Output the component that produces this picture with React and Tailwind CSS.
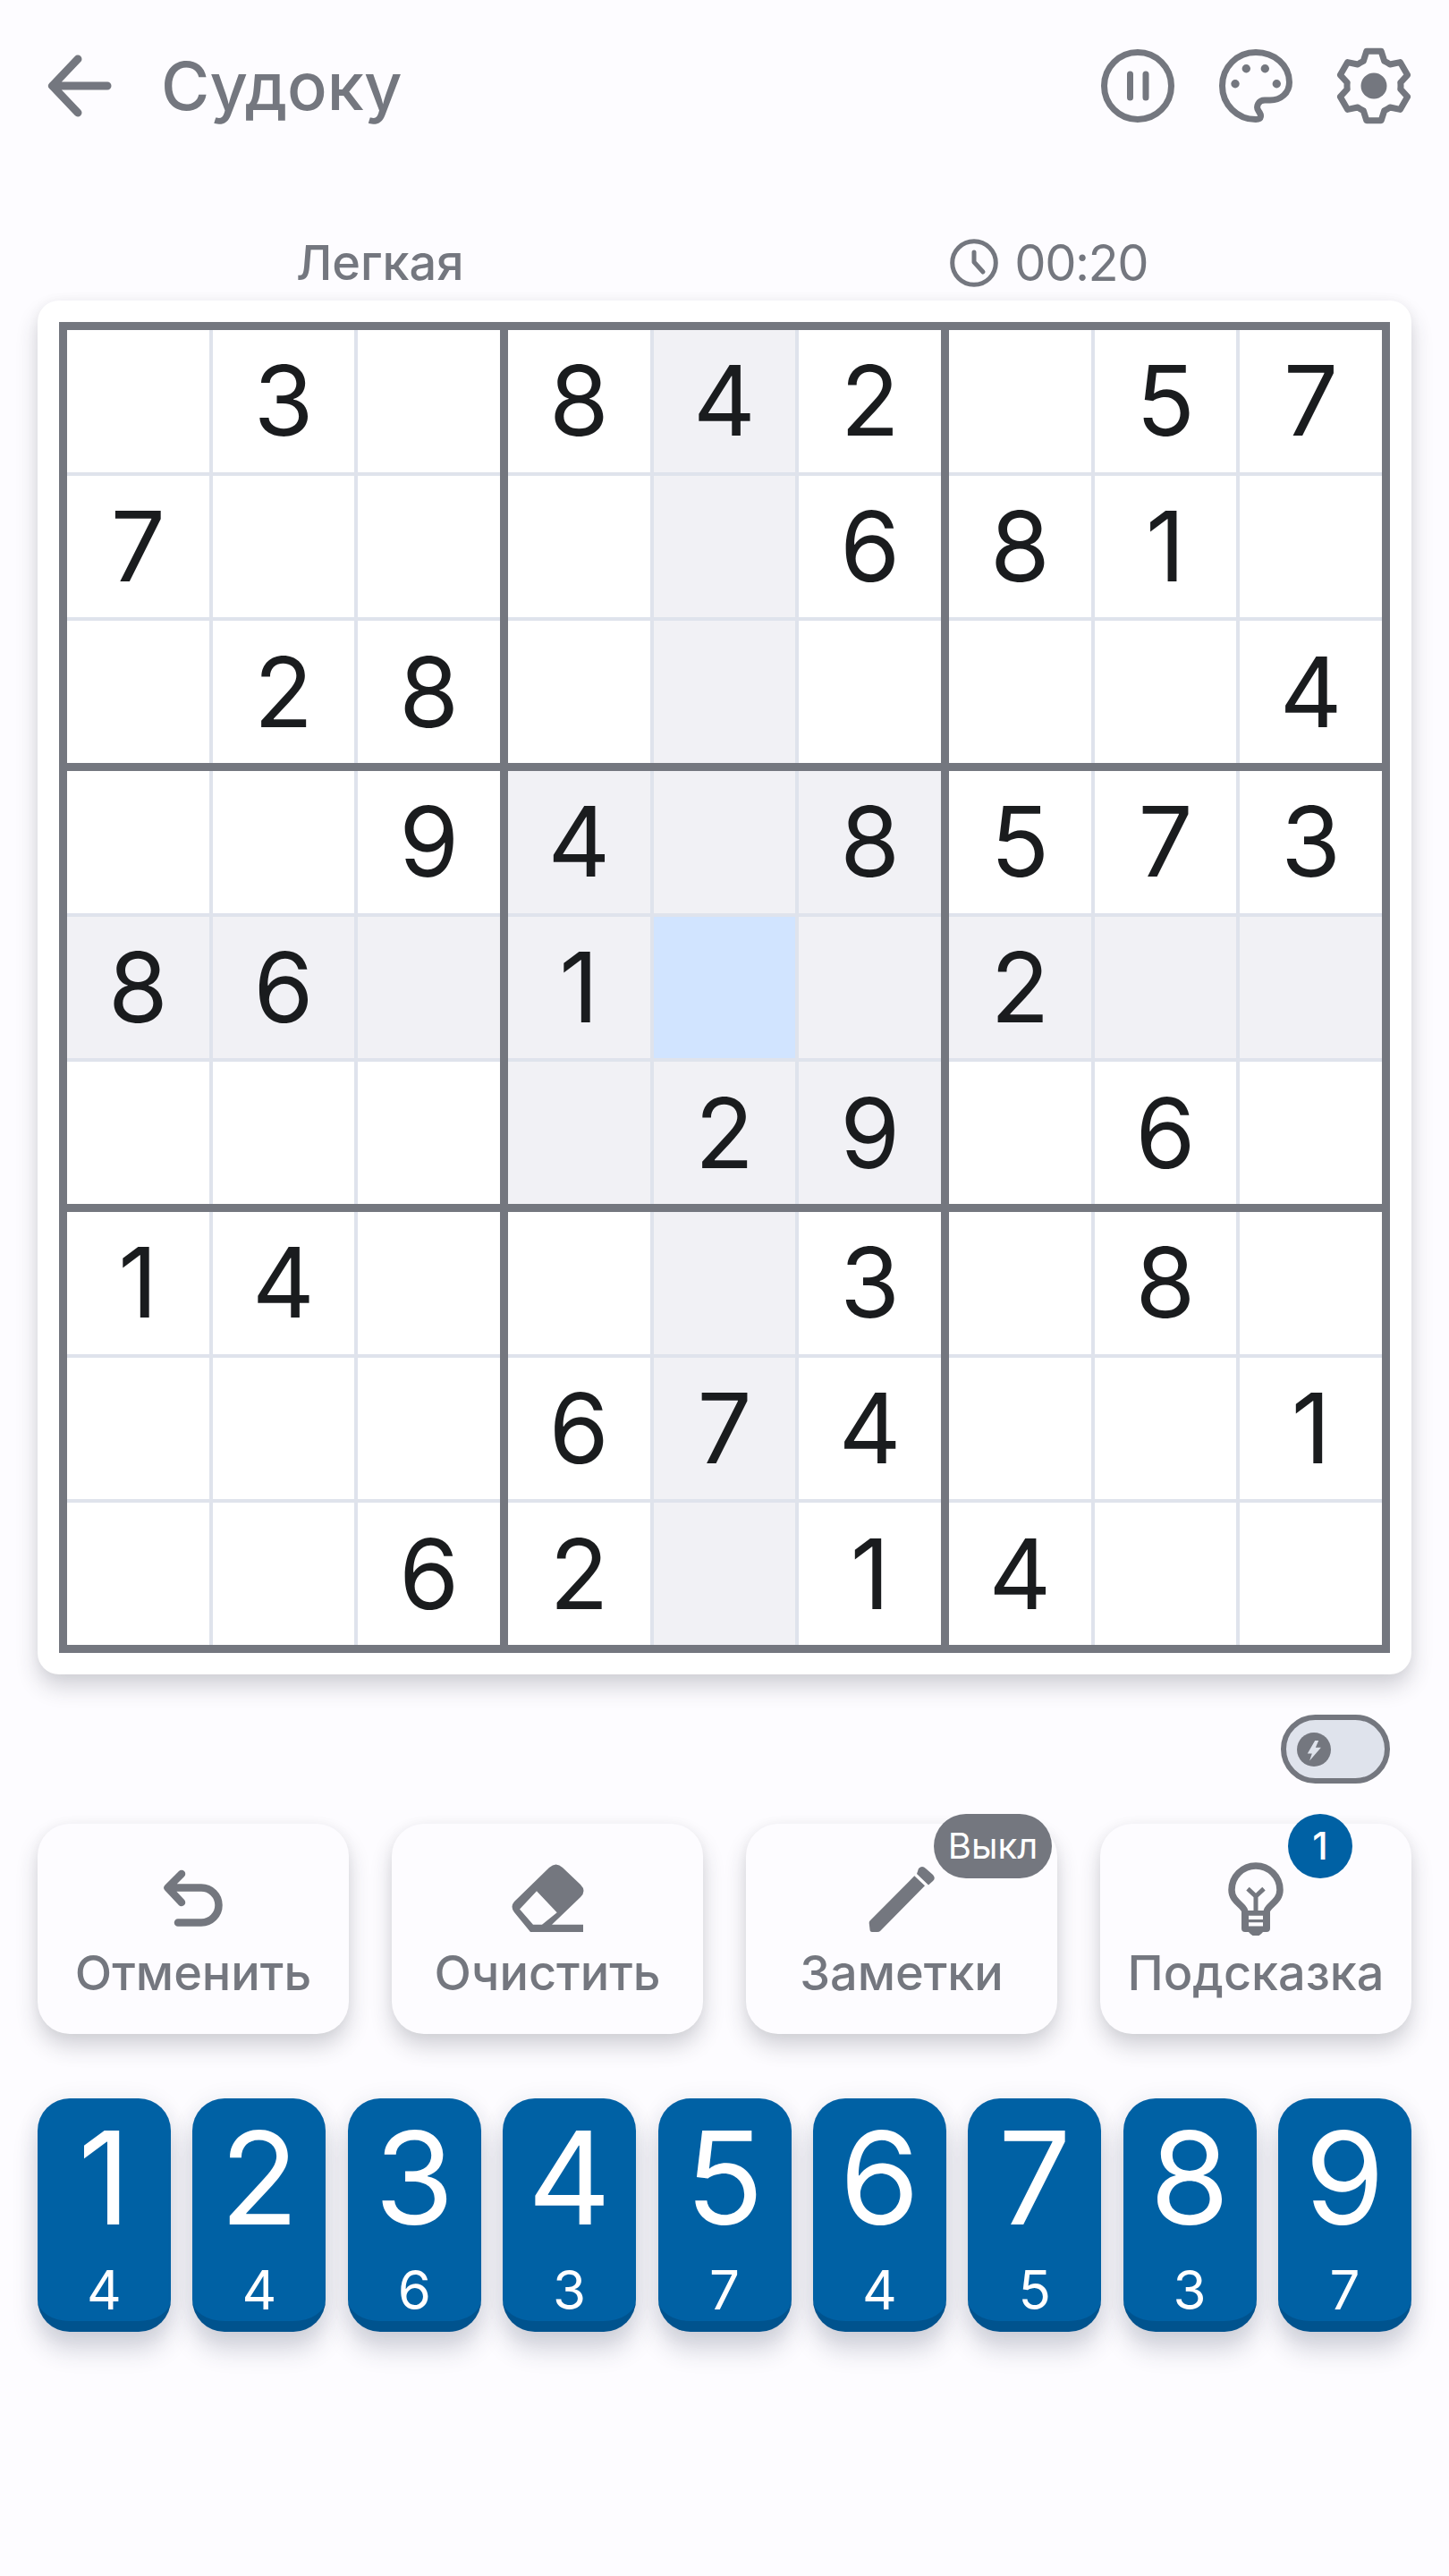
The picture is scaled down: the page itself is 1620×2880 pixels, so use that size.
const GRAY = "#74777f";
const rows = [
  "030842057",
  "700006810",
  "028000004",
  "009408573",
  "860100200",
  "000029060",
  "140003080",
  "000674001",
  "006201400",
];
const pad = [[1, 4], [2, 4], [3, 6], [4, 3], [5, 7], [6, 4], [7, 5], [8, 3], [9, 7]];

function gearPath(cx, cy) {
  const R = 39.5, r = 30;
  const pt = (rad, deg) => {
    const a = (deg * Math.PI) / 180;
    return `${(cx + rad * Math.cos(a)).toFixed(2)} ${(cy + rad * Math.sin(a)).toFixed(2)}`;
  };
  let d = "";
  for (let i = 0; i < 6; i++) {
    const a = i * 60 - 90;
    d += `${i === 0 ? "M" : "L"}${pt(r, a - 23)} L${pt(R, a - 12)} L${pt(R, a + 12)} L${pt(r, a + 23)} `;
    d += `A${r} ${r} 0 0 1 ${pt(r, a + 37)} `;
  }
  return d + "Z";
}

function Cell({ r, c }) {
  const v = rows[r][c];
  const inBox = r >= 3 && r <= 5 && c >= 3 && c <= 5;
  const selected = r === 4 && c === 4;
  const hl = r === 4 || c === 4 || inBox;
  return (
    <div className={`flex items-center justify-center text-[108px] leading-none text-[#1a1c1e] ${selected ? "bg-[#d1e4ff]" : hl ? "bg-[#f1f1f5]" : "bg-white"}`}>
      {v !== "0" ? v : ""}
    </div>
  );
}

function ActionButton({ label, children, badge }) {
  return (
    <div className="relative flex h-[235px] w-[348px] flex-col items-center rounded-[36px] bg-[#fdfcff] pt-[41px] shadow-[0_14px_24px_rgba(40,44,60,0.2),0_0_14px_rgba(40,44,60,0.04)]">
      <div className="h-[84px] w-[84px]">{children}</div>
      <div className="mt-[12px] text-[54px] font-medium leading-[60px]" style={{ color: GRAY }}>{label}</div>
      {badge}
    </div>
  );
}

export default function App() {
  return (
    <div className="min-h-[2880px] w-[1620px] bg-[#fdfcff] px-[42px] font-['Inter','Noto_Sans',sans-serif]">
      <header className="flex h-[192px] items-center justify-between">
        <div className="flex items-center">
          <svg width="84" height="84" viewBox="48 54 84 84" className="ml-[6px]" fill="none" stroke={GRAY} strokeWidth="9" strokeLinecap="round" strokeLinejoin="round">
            <path d="M87 66 L58.5 96 L87 126 M58.5 96 L120 96" />
          </svg>
          <span className="ml-[48px] text-[74px] font-medium leading-[84px]" style={{ color: GRAY }}>Судоку</span>
        </div>
        <div className="flex items-center gap-[48px]">
          <svg width="84" height="84" viewBox="1230 54 84 84" fill="none" stroke={GRAY} strokeWidth="7">
            <circle cx="1272" cy="96" r="37.5" />
            <path d="M1263.5 83 V109 M1281 83 V109" strokeLinecap="round" />
          </svg>
          <svg width="84" height="84" viewBox="1362 54 84 84" fill="none">
            <path stroke={GRAY} strokeWidth="7" strokeLinejoin="round" d="M1404 133.5 C1383 133.5 1366.5 116.5 1366.5 96 C1366.5 75 1383 58.5 1404 58.5 C1425 58.5 1441.5 73 1441.5 92 C1441.5 104 1432 112 1420 112 L1414 112 C1407 112 1403.5 119 1407 124 C1410.5 128.5 1411 133.5 1404 133.5 Z" />
            <g fill={GRAY}>
              <circle cx="1393.3" cy="76.7" r="4.7" />
              <circle cx="1414.3" cy="76.7" r="4.7" />
              <circle cx="1381" cy="93.7" r="4.7" />
              <circle cx="1427.3" cy="93.7" r="4.7" />
            </g>
          </svg>
          <svg width="84" height="84" viewBox="1494 54 84 84" fill="none" overflow="visible">
            <path d={gearPath(1536, 96)} stroke={GRAY} strokeWidth="7" strokeLinejoin="round" />
            <circle cx="1536" cy="96" r="14.5" fill={GRAY} />
          </svg>
        </div>
      </header>

      <div className="mb-[6px] ml-[17px] mr-[23px] mt-[66px] flex h-[72px] items-center justify-around text-[54px] font-medium" style={{ color: GRAY }}>
        <span className="leading-[72px]">Легкая</span>
        <div className="flex items-center">
          <svg width="54" height="54" viewBox="0 0 54 54" fill="none" stroke={GRAY} strokeWidth="5" strokeLinecap="round" strokeLinejoin="round">
            <circle cx="27" cy="27" r="24.3" />
            <path d="M27 15 V26 L37 37" />
          </svg>
          <span className="ml-[18px] text-[56px] font-normal leading-[72px] tracking-[-1.5px]">00:20</span>
        </div>
      </div>

      <div className="rounded-[24px] bg-white p-[24px] shadow-[0_14px_24px_rgba(40,44,60,0.2),0_0_14px_rgba(40,44,60,0.04)]">
        <div className="grid h-[1488px] w-[1488px] grid-cols-3 grid-rows-3 gap-[9px] border-[9px] border-[#74777f] bg-[#74777f]">
          {[0, 1, 2].flatMap((br) =>
            [0, 1, 2].map((bc) => (
              <div key={`${br}-${bc}`} className="grid grid-cols-3 grid-rows-3 gap-[4px] bg-[#dfe3ec]">
                {[0, 1, 2].flatMap((r) =>
                  [0, 1, 2].map((c) => <Cell key={`${r}-${c}`} r={br * 3 + r} c={bc * 3 + c} />)
                )}
              </div>
            ))
          )}
        </div>
      </div>

      <div className="mr-[24px] mt-[45px] flex justify-end">
        <div className="flex h-[77px] w-[122px] items-center rounded-full border-[6px] border-[#74777f] bg-[#dfe3ec] pl-[12px]">
          <svg width="38" height="38" viewBox="0 0 113 113">
            <circle cx="56.5" cy="56.5" r="56.5" fill={GRAY} />
            <path d="M60 27 L35 70 L50 70 L42 94 L80 50 L62 50 L72 27 Z" fill="#dfe3ec" />
          </svg>
        </div>
      </div>

      <div className="mt-[45px] flex justify-between">
        <ActionButton label="Отменить">
          <svg width="84" height="84" viewBox="174 2080 84 84" fill="none" stroke={GRAY} strokeWidth="8.5" strokeLinecap="round" strokeLinejoin="round">
            <path d="M203 2095 L187.5 2110.5 L203 2127 M187.5 2110.5 L225 2110.5 A19.5 19.5 0 0 1 225 2149.5 L199 2149.5" />
          </svg>
        </ActionButton>
        <ActionButton label="Очистить">
          <svg width="84" height="84" viewBox="570 2080 84 84">
            <path fill={GRAY} fillRule="evenodd" d="M614 2088 Q621.7 2081 629 2088 L649 2107 Q656 2114 649 2121 L617 2151.7 L652 2151.7 L652 2160 L593 2160 L575 2138 Q570 2131.7 575 2126 Z M600 2114.3 L622.7 2138.3 L606 2151.7 L596 2151.7 L581 2134.5 Z" />
          </svg>
        </ActionButton>
        <ActionButton
          label="Заметки"
          badge={
            <div className="absolute left-[210px] top-[-11px] flex h-[72px] w-[132px] items-center justify-center rounded-full text-[40px] leading-none text-white" style={{ backgroundColor: GRAY }}>
              Выкл
            </div>
          }
        >
          <svg width="84" height="84" viewBox="966 2080 84 84" fill={GRAY}>
            <path d="M1027 2089 Q1031 2085 1035 2089 L1043 2096 Q1046.5 2100 1043 2103 L1038 2107.5 L1025 2095 Z" />
            <path d="M1022.3 2097.3 L1034 2108.3 L984 2159 Q983 2160 981 2160 L975 2160 Q972.5 2160 972.5 2157 L971.7 2150 Q971.5 2148.5 973 2147 Z" />
          </svg>
        </ActionButton>
        <ActionButton
          label="Подсказка"
          badge={
            <div className="absolute left-[210px] top-[-11px] flex h-[72px] w-[72px] items-center justify-center rounded-full bg-[#0061a4] text-[42px] font-medium leading-none text-white">
              1
            </div>
          }
        >
          <svg width="84" height="84" viewBox="1362 2080 84 84" fill="none">
            <path stroke={GRAY} strokeWidth="7.5" d="M1392 2138 C1392 2130 1377 2127 1377 2113 A27 27 0 0 1 1431 2113 C1431 2127 1416 2130 1416 2138" />
            <path fill={GRAY} d="M1390 2136 H1418 Q1420 2136 1420 2138 V2156 Q1420 2160 1416 2160 H1392 Q1388 2160 1388 2156 V2138 Q1388 2136 1390 2136 Z M1396 2160 H1412 Q1408 2165 1404 2165 Q1400 2165 1396 2160 Z" />
            <path stroke={GRAY} strokeWidth="5" d="M1395 2111.7 L1404 2120 L1413 2111.7 M1404 2120 V2137" />
            <path stroke="#fdfcff" strokeWidth="4.2" d="M1396 2143.8 H1412 M1396 2151.3 H1412" />
          </svg>
        </ActionButton>
      </div>

      <div className="mt-[72px] flex justify-between">
        {pad.map(([n, count]) => (
          <div key={n} className="flex h-[261px] w-[149px] flex-col items-center rounded-[36px] border-b-[12px] border-[#00538e] bg-[#0061a4] pt-[17px] text-white shadow-[0_20px_28px_rgba(40,50,80,0.2),0_0_24px_rgba(40,50,80,0.07)]">
            <div className="text-[144px] leading-[144px]">{n}</div>
            <div className="mt-[23px] text-[60px] leading-[60px]">{count}</div>
          </div>
        ))}
      </div>
    </div>
  );
}
